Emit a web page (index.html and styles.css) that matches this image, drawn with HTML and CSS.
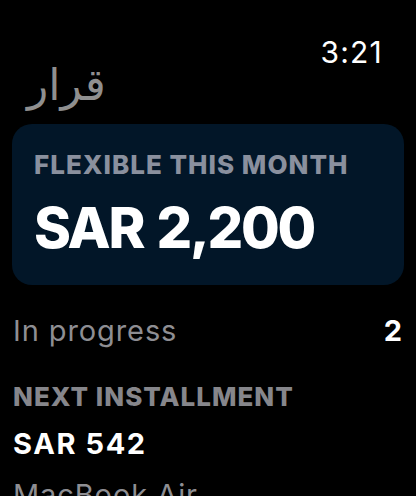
FILE: index.html
```html
<!DOCTYPE html>
<html lang="en">
<head>
<meta charset="utf-8">
<title>Qarar</title>
<link rel="stylesheet" href="styles.css">
</head>
<body>
<div class="screen">
  <header class="top">
    <div class="time">3:21</div>
    <div class="title" lang="ar" dir="rtl">قرار</div>
  </header>
  <section class="card">
    <div class="card-label">FLEXIBLE THIS MONTH</div>
    <div class="card-amount">SAR 2,200</div>
  </section>
  <div class="row">
    <span class="row-label">In progress</span>
    <span class="row-value">2</span>
  </div>
  <div class="section-label">NEXT INSTALLMENT</div>
  <div class="amount">SAR 542</div>
  <div class="item">MacBook Air</div>
</div>
</body>
</html>
```
FILE: styles.css
```css
html, body {
  margin: 0;
  padding: 0;
  background: #000;
}
body {
  width: 416px;
  height: 496px;
  overflow: hidden;
  font-family: Inter, "Liberation Sans", sans-serif;
  color: #fff;
}
.screen {
  display: flex;
  flex-direction: column;
}
.top {
  display: flex;
  flex-direction: column;
  padding: 40px 32px 0 27px;
}
.time {
  align-self: flex-end;
  font-size: 30px;
  line-height: 24px;
  font-weight: 400;
  letter-spacing: 1.2px;
  margin-right: 1px;
}
.title {
  align-self: flex-start;
  font-family: "DejaVu Sans", sans-serif;
  font-size: 44px;
  line-height: 48px;
  color: #8f8f8f;
  margin-top: -3px;
  margin-bottom: 3px;
}
.card {
  margin: 12px 12px 0 12px;
  height: 161px;
  box-sizing: border-box;
  background: #021628;
  border-radius: 20px;
  padding: 26px 22px 0 22px;
  display: flex;
  flex-direction: column;
}
.card-label {
  font-size: 26px;
  line-height: 30px;
  font-weight: 800;
  letter-spacing: 1px;
  color: #8a909e;
}
.card-amount {
  margin-top: 18px;
  font-size: 56px;
  line-height: 60px;
  font-weight: 800;
  letter-spacing: -2.2px;
  word-spacing: 3px;
}
.row {
  display: flex;
  justify-content: space-between;
  align-items: baseline;
  margin-top: 29px;
  padding: 0 14px 0 13px;
}
.row-label {
  font-size: 29px;
  line-height: 34px;
  font-weight: 400;
  letter-spacing: 0.9px;
  color: #8e8e93;
}
.row-value {
  font-size: 29px;
  line-height: 34px;
  font-weight: 700;
}
.section-label {
  margin-top: 34px;
  padding-left: 13px;
  font-size: 26px;
  line-height: 30px;
  font-weight: 800;
  letter-spacing: 1px;
  color: #86868b;
}
.amount {
  margin-top: 15px;
  padding-left: 13px;
  font-size: 29px;
  line-height: 34px;
  font-weight: 700;
  letter-spacing: 1.6px;
}
.item {
  margin-top: 17px;
  padding-left: 13px;
  font-size: 29px;
  line-height: 34px;
  font-weight: 400;
  letter-spacing: 0.9px;
  color: #8e8e93;
}
```
